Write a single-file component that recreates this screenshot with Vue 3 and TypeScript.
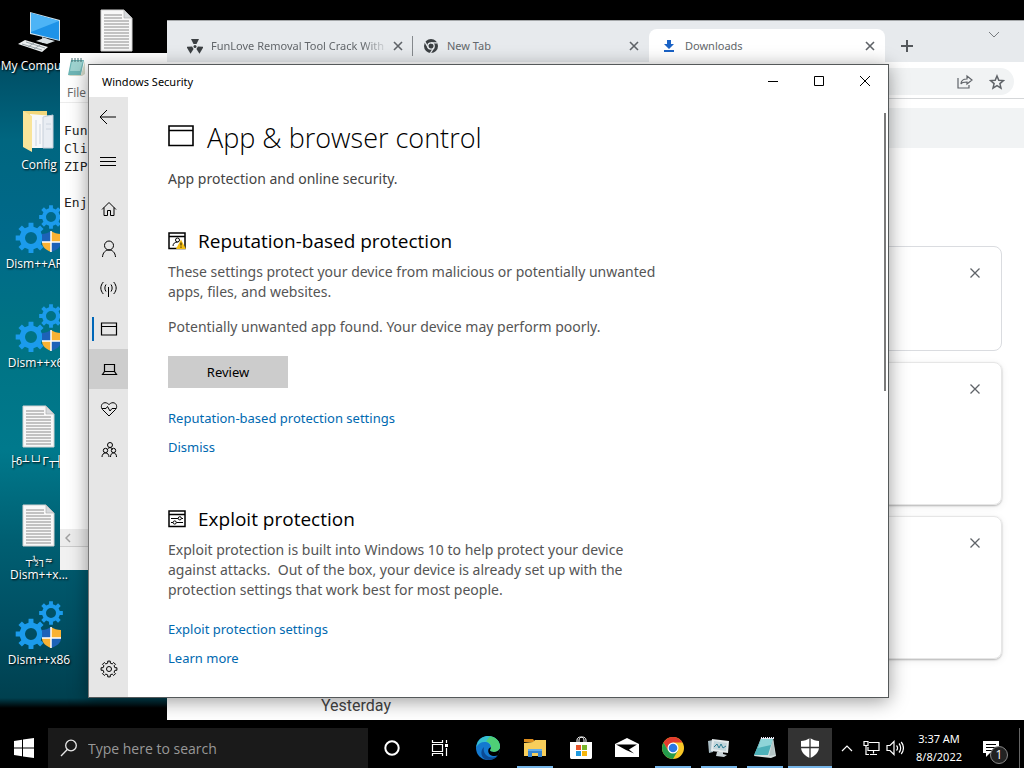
<script setup lang="ts">
import { ref } from 'vue'

type IconKind = 'computer' | 'folder' | 'gears' | 'doc'
interface Shortcut { kind: IconKind; name?: string; symbols?: string }

const shortcuts: Shortcut[] = [
  { kind: 'computer', name: 'My Computer' },
  { kind: 'folder', name: 'Config' },
  { kind: 'gears', name: 'Dism++AR...' },
  { kind: 'gears', name: 'Dism++x64' },
  { kind: 'doc', symbols: '├δ┴└┘Γ┬┤ú' },
  { kind: 'doc', symbols: '┬½┐≈', name: 'Dism++x...' },
  { kind: 'gears', name: 'Dism++x86' },
]

const notes = 'Fun\nCli\nZIP\n\nEnj'
const search = ref('')
const cards = ['short', 'tall', 'tall']

function gear(cx: number, cy: number, teeth: number, outer: number, inner: number): string {
  const step = (Math.PI * 2) / teeth
  const points: string[] = []
  for (let i = 0; i < teeth; i++) {
    const a = i * step - Math.PI / 2
    const parts: [number, number][] = [[-0.28, inner], [-0.2, outer], [0.2, outer], [0.28, inner]]
    for (const [k, r] of parts) {
      points.push(`${(cx + r * Math.cos(a + k * step)).toFixed(2)} ${(cy + r * Math.sin(a + k * step)).toFixed(2)}`)
    }
  }
  return `M${points.join('L')}Z`
}

const bigGear = gear(16, 33, 8, 15.5, 11.5)
const smallGear = gear(36, 12, 8, 12, 9)
const outlineGear = gear(9, 9, 8, 8, 6)
</script>

<template>
  <div class="screen">
    <main class="desktop">
      <div class="shortcuts">
        <div v-for="(s, i) in shortcuts" :key="i" class="shortcut">
          <svg v-if="s.kind === 'computer'" class="pic" viewBox="0 0 48 48">
            <path d="M15 5l30 8v21l-30-7z" fill="#cfe3ee" />
            <path d="M16 6l28 8v19l-28-7z" fill="#1d93e8" />
            <path d="M16 6l28 8-28 11z" fill="#4db4f6" />
            <path d="M27 30l6 2v4h-6z" fill="#a9b8c0" />
            <path d="M21 34l8-3 11 3-8 3z" fill="#d8e0e4" />
            <path d="M3 37l7-4 23 7-6 5z" fill="#eceff0" />
            <path d="M7 37l20 6M11 35l19 6M13 40l6-4M19 42l6-4" stroke="#9aa5aa" fill="none" />
          </svg>
          <svg v-else-if="s.kind === 'folder'" class="pic" viewBox="0 0 48 48">
            <path d="M8 5h24v36H8z" fill="#f2d77c" />
            <path d="M15 8l23 2v32H17z" fill="#f7f8fa" />
            <path d="M28 11l10-2v33H28z" fill="#e9edf3" stroke="#c6cfda" />
            <path d="M21 14v26M25 18v20M31 18h5M31 23h5" stroke="#ccd4df" />
            <path d="M8 5l9 5v36l-9-5z" fill="#f9e49a" />
          </svg>
          <svg v-else-if="s.kind === 'gears'" class="pic" viewBox="0 0 48 48">
            <g fill="#1b9bec" fill-rule="evenodd">
              <path :d="bigGear + 'M22 33a6 6 0 1 0-12 0a6 6 0 1 0 12 0Z'" />
              <path :d="smallGear + 'M41 12a5 5 0 1 0-10 0a5 5 0 1 0 10 0Z'" />
            </g>
            <path d="M36 26c-3 2-6 3-9 3v8h9z" fill="#1d62b8" />
            <path d="M36 26c3 2 6 3 10 3v8H36z" fill="#f9b233" />
            <path d="M27 37c0 5 4 8 9 10V37z" fill="#f9b233" />
            <path d="M46 37c0 5-4 8-10 10V37z" fill="#1d62b8" />
            <path d="M36 26v21M27 37h19" stroke="#fff" stroke-width="1.500" />
          </svg>
          <svg v-else class="pic" viewBox="0 0 48 48">
            <path d="M8 3h23l8 8v33H8z" fill="#f8f8f8" stroke="#d2d2d2" />
            <path d="M31 3v8h8z" fill="#d6d9dc" stroke="#aaa" stroke-width=".6" />
            <path d="M11 8h18M11 11h18M11 14h25M11 17h25M11 20h25M11 23h25M11 26h25M11 29h25M11 32h25M11 35h25M11 38h25M11 41h25" stroke="#8c8c8c" />
          </svg>
          <span v-if="s.symbols" class="caption symbols">{{ s.symbols }}</span>
          <span v-if="s.name" class="caption">{{ s.name }}</span>
        </div>
        <div class="shortcut">
          <svg class="pic" viewBox="0 0 48 48">
            <path d="M8 3h23l8 8v33H8z" fill="#f8f8f8" stroke="#d2d2d2" />
            <path d="M31 3v8h8z" fill="#d6d9dc" stroke="#aaa" stroke-width=".6" />
            <path d="M11 8h18M11 11h18M11 14h25M11 17h25M11 20h25M11 23h25M11 26h25M11 29h25M11 32h25M11 35h25M11 38h25M11 41h25" stroke="#8c8c8c" />
          </svg>
        </div>
      </div>

      <section class="notepad">
        <header class="np-title">
          <svg width="18" height="20" viewBox="0 0 18 20">
            <path d="M3 3h13l-3 15H0z" fill="#6db5b5" />
            <path d="M4 4h11l-3 10H2z" fill="#9ed3d0" />
            <path d="M0 18h13l4-14v13l-3 2H2z" fill="#d3d9c8" />
            <path d="M4 1v4M7 1v4M10 1v4M13 1v4" stroke="#446f70" />
          </svg>
        </header>
        <div class="np-menu">File</div>
        <pre class="np-text">{{ notes }}</pre>
        <div class="np-scroll">
          <svg width="6" height="10" viewBox="0 0 6 10"><path d="M5 1L1 5l4 4" fill="none" stroke="#a0a0a0" stroke-width="1.500" /></svg>
        </div>
        <div class="np-status"></div>
      </section>

      <section class="browser">
        <header class="strip">
          <div class="tab first">
            <svg class="fav" viewBox="0 0 16 16">
              <g fill="#3c4043">
                <path d="M4 1h8L9.500 6h-3z" />
                <path d="M4 1h8L9.500 6h-3z" transform="rotate(120 8 8.500)" />
                <path d="M4 1h8L9.500 6h-3z" transform="rotate(240 8 8.500)" />
                <circle cx="8" cy="8.500" r="1.500" />
              </g>
            </svg>
            <span class="tab-name fade">FunLove Removal Tool Crack With</span>
            <button class="x" aria-label="Close tab"><svg width="10" height="10" viewBox="0 0 10 10"><path d="M1 1l8 8M9 1L1 9" /></svg></button>
          </div>
          <div class="tab">
            <svg class="fav" viewBox="0 0 16 16">
              <circle cx="8" cy="8" r="7" fill="#3c4043" />
              <circle cx="8" cy="8" r="3.200" fill="#3c4043" stroke="#e7eaed" stroke-width="1.300" />
              <path d="M8 4.800h6.500M5.200 9.600L2 4M10.800 9.600L7.500 15" stroke="#e7eaed" stroke-width="1.300" />
            </svg>
            <span class="tab-name">New Tab</span>
            <button class="x" aria-label="Close tab"><svg width="10" height="10" viewBox="0 0 10 10"><path d="M1 1l8 8M9 1L1 9" /></svg></button>
          </div>
          <div class="tab active">
            <svg class="fav" viewBox="0 0 16 16"><path d="M6 2h4v4h3l-5 5-5-5h3zM3 12h10v2H3z" fill="#1a62c5" /></svg>
            <span class="tab-name">Downloads</span>
            <button class="x" aria-label="Close tab"><svg width="10" height="10" viewBox="0 0 10 10"><path d="M1 1l8 8M9 1L1 9" /></svg></button>
          </div>
          <button class="plus" aria-label="New tab"><svg width="12" height="12" viewBox="0 0 12 12"><path d="M6 0v12M0 6h12" stroke="#54585c" stroke-width="2" /></svg></button>
          <svg class="more" width="12" height="8" viewBox="0 0 12 8"><path d="M1 1l5 5 5-5" fill="none" stroke="#777b7f" /></svg>
        </header>
        <div class="toolbar">
          <div class="omnibox">
            <svg width="16" height="16" viewBox="0 0 16 16"><path d="M1 4v10h11v-3M4 10c0-4 3-5 6-5V2l5 4-5 4V8c-3 0-5 0-6 2z" fill="none" stroke="#5f6368" stroke-width="1.200" /></svg>
            <svg width="16" height="16" viewBox="0 0 16 16"><path d="M8 2l1.800 4.200 4.600.4-3.500 3 1.100 4.500L8 11.700l-4 2.400 1.100-4.500-3.500-3 4.600-.4z" fill="none" stroke="#5f6368" stroke-width="1.500" /></svg>
          </div>
        </div>
        <div class="band"></div>
        <div class="cards">
          <article v-for="(c, i) in cards" :key="i" class="card" :class="c">
            <button class="x" aria-label="Remove"><svg width="10" height="10" viewBox="0 0 10 10"><path d="M.5.500l9 9M9.500.500l-9 9" /></svg></button>
          </article>
        </div>
        <h4 class="day">Yesterday</h4>
      </section>

      <section class="security">
        <header class="titlebar">
          <span class="win-name">Windows Security</span>
          <button aria-label="Minimize"><svg width="10" height="10" viewBox="0 0 10 10"><path d="M0 5.500h10" /></svg></button>
          <button aria-label="Maximize"><svg width="10" height="10" viewBox="0 0 10 10"><path d="M.5.500h9v9h-9z" /></svg></button>
          <button aria-label="Close"><svg width="12" height="12" viewBox="0 0 12 12"><path d="M1 1l10 10M11 1L1 11" /></svg></button>
        </header>
        <div class="body">
          <nav class="rail">
            <button aria-label="Back"><svg viewBox="0 0 18 18"><path d="M7 2L0 9l7 7M0 9h16" /></svg></button>
            <button class="menu" aria-label="Menu"><svg viewBox="0 0 18 18"><path d="M0 5.500h16M0 9.500h16M0 13.500h16" /></svg></button>
            <button aria-label="Home"><svg viewBox="0 0 18 18"><path d="M2 9.500l7-7 7 7M4 7.500v8h3.500v-5h3v5H14v-8" /></svg></button>
            <button aria-label="Account protection"><svg viewBox="0 0 18 18"><circle cx="9" cy="5.500" r="4.500" /><path d="M2.500 17c.3-4.500 3-7 6.500-7s6.200 2.500 6.500 7" /></svg></button>
            <button aria-label="Firewall"><svg viewBox="0 0 18 18"><path d="M8.500 7v10M6 4.500c-1.500 2-1.500 5 0 7M11 4.500c1.500 2 1.500 5 0 7M3.300 2c-3.300 4-3.300 8 0 12M13.700 2c3.300 4 3.300 8 0 12" /></svg></button>
            <button class="current" aria-label="App &amp; browser control"><svg viewBox="0 0 18 18"><path d="M1.500 3v12h15V3zM1.500 6.500h15" stroke-width="1.200" /></svg></button>
            <button class="hover" aria-label="Device security"><svg viewBox="0 0 18 18"><path d="M4.500 4.500h10v7h-10zM2.500 14.500l2-3h10l2 3z" stroke-width="1.200" /></svg></button>
            <button aria-label="Device health"><svg viewBox="0 0 18 18"><path d="M9 16L2.500 9.500C.5 7.500 1 3 5 2.700c2 0 3 1 4 2 1-1 2-2 4-2 4 .3 4.500 4.800 2.500 6.800zM2 8.500h4l1.500-2 2.500 4.500 2-2.500h4" /></svg></button>
            <button aria-label="Family options"><svg viewBox="0 0 18 18"><circle cx="10" cy="5" r="2.500" /><circle cx="5.500" cy="10.500" r="2.200" /><circle cx="13.500" cy="10.500" r="2.200" /><path d="M2 17c0-2.500 1.500-4 3.500-4S9 14.500 9 17M10.500 17c0-2.500 1-4 3-4s3 1.500 3 4M7.500 9.500c1-2.500 4-2.500 5 0" /></svg></button>
            <button class="last" aria-label="Settings"><svg viewBox="0 0 18 18"><path :d="outlineGear" /><circle cx="9" cy="9" r="2.500" /></svg></button>
          </nav>
          <div class="content">
            <h1><svg width="26" height="22" viewBox="0 0 26 22"><path d="M1 1h24v19.500H1zM1 5.500h24" fill="none" stroke="#000" stroke-width="1.600" /></svg>App &amp; browser control</h1>
            <p class="lead">App protection and online security.</p>

            <h2>
              <svg width="18" height="18" viewBox="0 0 18 18">
                <path d="M1 1h16v15.500H1zM1 4.500h16" fill="none" stroke="#000" stroke-width="1.500" />
                <circle cx="9.500" cy="8" r="2" fill="none" stroke="#000" /><path d="M5 14c0-2.500 2-4 4.500-4" fill="none" stroke="#000" />
                <path d="M13 7.500l5 9.500H8z" fill="#f5bf15" /><path d="M13 10.500v3M13 14.500v1.200" stroke="#403000" stroke-width="1.200" />
              </svg>Reputation-based protection
            </h2>
            <p>These settings protect your device from malicious or potentially unwanted apps, files, and websites.</p>
            <p class="notice">Potentially unwanted app found. Your device may perform poorly.</p>
            <button class="review">Review</button>
            <a href="#reputation">Reputation-based protection settings</a>
            <a href="#dismiss" class="next">Dismiss</a>

            <h2 class="second">
              <svg width="18" height="18" viewBox="0 0 18 18">
                <path d="M1 1h16v15.500H1zM1 4.500h16" fill="none" stroke="#000" stroke-width="1.500" />
                <path d="M3 8.500h7M13.500 8.500H15M3 12.500h2M8.500 12.500H15" stroke="#000" stroke-width="1.200" />
                <circle cx="11.800" cy="8.300" r="1.600" fill="none" stroke="#000" /><circle cx="6.700" cy="12.500" r="1.600" fill="none" stroke="#000" />
              </svg>Exploit protection
            </h2>
            <p>Exploit protection is built into Windows 10 to help protect your device against attacks.&nbsp; Out of the box, your device is already set up with the protection settings that work best for most people.</p>
            <a href="#exploit">Exploit protection settings</a>
            <a href="#learn" class="next">Learn more</a>
          </div>
          <div class="thumb"></div>
        </div>
      </section>
    </main>

    <footer class="taskbar">
      <button class="start" aria-label="Start"><svg width="20" height="20" viewBox="0 0 20 20"><path d="M0 3l8-1.200v7.700H0zM9 1.600L20 0v9.500H9zM0 10.500h8v7.700L0 17zM9 10.500h11V20L9 18.400z" fill="#fff" /></svg></button>
      <label class="search">
        <svg width="18" height="18" viewBox="0 0 18 18"><circle cx="11" cy="6.500" r="5.300" /><path d="M7.300 10.500L1 17" /></svg>
        <input v-model="search" type="text" placeholder="Type here to search" aria-label="Search" />
      </label>
      <div class="tiles">
        <button class="tile wide" aria-label="Cortana"><svg width="18" height="18" viewBox="0 0 18 18"><circle cx="9" cy="9" r="6.700" fill="none" stroke="#fff" stroke-width="2" /></svg></button>
        <button class="tile wide" aria-label="Task view"><svg width="18" height="18" viewBox="0 0 18 18"><path d="M1.500 1v2.500h10V1M1.500 17v-2.500h10V17M1.500 5.500h10v7h-10zM15.500 1v3M15.500 9v8" fill="none" stroke="#fff" stroke-width="1.200" /><path d="M14 5h3v3h-3z" fill="#fff" /></svg></button>
        <button class="tile wide" aria-label="Edge">
          <svg width="24" height="24" viewBox="0 0 24 24">
            <circle cx="12" cy="12" r="12" fill="#1479cf" />
            <path d="M1 8C3 2 8 0 12 0c7 0 12 5 12 10.500 0 4-3 5.500-6 5.500-2 0-4-.5-4-1.700 0-.8 1-1.300 1-3C15 8 12 6 8.500 6 5 6 2.500 7.500.3 11z" fill="#35bfd0" />
            <path d="M14 .2c6 1 10 5 10 10.300 0 4-3 5.500-6 5.500-2 0-4-.5-4-1.700 0-.8 1-1.300 1-3 0-3-2-5-5-6z" fill="#4fcf76" />
            <path d="M8 11c-1.500 6 3 10.500 8.500 10.500 2.300 0 4-.8 5.500-2C20 22.500 16 24 12 24 4 23 4 14 8 11z" fill="#0b4a94" />
            <path d="M15 11.300c0 1.700-1 2.200-1 3 0 1.200 2 1.700 4 1.700 2.300 0 5-1 5.700-3.400L24 14l-1.800 5.300c-5 2-10-.3-10-4.300 0-2 1-3.200 2.800-3.700z" fill="#000" />
          </svg>
        </button>
        <button class="tile open" aria-label="File Explorer">
          <svg width="22" height="20" viewBox="0 0 22 20"><path d="M0 1h9l2 3H0z" fill="#dc8c1c" /><path d="M0 5l9-1 2-2h11v16H0z" fill="#f7ce5b" /><path d="M4 11h14v8h-4v-4H8v4H4z" fill="#3584cf" /><path d="M4 11h14v2H4z" fill="#65aee8" /></svg>
        </button>
        <button class="tile" aria-label="Store">
          <svg width="24" height="24" viewBox="0 0 24 24"><path d="M8 7V4c0-4 7-4 7 0v3M10 7V4c0-4 7-4 7 0v3" fill="none" stroke="#fff" /><path d="M1 6h22v15c0 1.500-.5 2-2 2H3c-1.500 0-2-.5-2-2z" fill="#fff" /><path d="M7 9h5v5H7z" fill="#e8552b" /><path d="M13 9h5v5h-5z" fill="#79b52c" /><path d="M7 15h5v5H7z" fill="#209be0" /><path d="M13 15h5v5h-5z" fill="#f5b60c" /></svg>
        </button>
        <button class="tile" aria-label="Mail"><svg width="24" height="20" viewBox="0 0 24 20"><path d="M0 6l12-6 12 6v13H0z" fill="#fff" /><path d="M1 6.500h21l-8 5 5 4-8-3.500z" fill="#000" /></svg></button>
        <button class="tile open" aria-label="Chrome">
          <svg width="22" height="22" viewBox="0 0 22 22"><circle cx="11" cy="11" r="11" fill="#f9c727" /><path d="M1.500 5.500A11 11 0 0 1 20.500 5.500H11L6.200 13.700z" fill="#e33b2e" /><path d="M1.500 5.500A11 11 0 0 0 11 22l4.800-8.200-9.600 0z" fill="#249a4b" /><circle cx="11" cy="11" r="5.500" fill="#fff" /><circle cx="11" cy="11" r="4.300" fill="#2b78e4" /></svg>
        </button>
        <button class="tile open" aria-label="Monitor">
          <svg width="22" height="20" viewBox="0 0 22 20"><path d="M0 3l5-1v12l-4 1z" fill="#a9bcc4" /><path d="M4 1l17 2-1 12-17-2z" fill="#e4eaec" /><path d="M6 3l13 2-1 8-13-2z" fill="#c3d5db" /><path d="M6 9l3-3 2 4 2-4 2 4 3-2" fill="none" stroke="#2b7d93" /><path d="M9 14h6v2l4 1-3 2-8-1z" fill="#c9d3d7" /></svg>
        </button>
        <button class="tile open" aria-label="Notepad">
          <svg width="24" height="22" viewBox="0 0 24 22"><path d="M8 1h12l3 18-5 2-17-2z" fill="#d5e0df" /><path d="M8 2h12l-5 16H1z" fill="#4db0b8" /><path d="M8 2h12l-2 6-13 3z" fill="#8fd5d8" /><path d="M20 2l2 16-6 1z" fill="#b4c5c5" /><path d="M8 1h13" stroke="#eef" stroke-dasharray="1 1" stroke-width="2" /></svg>
        </button>
        <button class="tile focused" aria-label="Windows Security">
          <svg width="18" height="20" viewBox="0 0 18 20"><path d="M9 0c3 2 6 2.700 9 3v6c0 5.500-4 9-9 11-5-2-9-5.500-9-11V3c3-.3 6-1 9-3z" fill="#fff" /><path d="M9 0v20M0 9.500h18" stroke="#333" stroke-width="1.300" /></svg>
        </button>
      </div>
      <div class="tray">
        <button aria-label="Hidden icons"><svg width="12" height="8" viewBox="0 0 12 8"><path d="M1 7l5-5 5 5" /></svg></button>
        <button aria-label="Network"><svg width="17" height="16" viewBox="0 0 17 16"><path d="M6 2.500h10v8H5V7M10.500 10.500v3M7 14.500h7M1 1.500h4v4H1zM3 5.500v9h3" /></svg></button>
        <button aria-label="Volume"><svg width="18" height="16" viewBox="0 0 18 16"><path d="M1 5.500h3l4-4v13l-4-4H1zM10.500 5.500c1.300 1.500 1.300 3.500 0 5M13 3.500c2.200 2.500 2.200 6.500 0 9M15.200 2c3 3.500 3 8.500 0 12" /></svg></button>
        <div class="clock"><span>3:37 AM</span><span>8/8/2022</span></div>
        <button class="notify" aria-label="Notifications">
          <svg width="18" height="17" viewBox="0 0 18 17"><path class="solid" d="M1 1h16v12H8l-4 4v-4H1z" /><path class="ruled" d="M4 4.500h10M4 7.500h10M4 10.500h6" /></svg>
          <span class="badge">1</span>
        </button>
        <div class="peek"></div>
      </div>
    </footer>
  </div>
</template>

<style>
body { margin: 0; background: #000; }
</style>

<style scoped>
.screen {
  display: flex;
  flex-direction: column;
  height: 100vh;
  overflow: hidden;
  background: #000;
  font-family: "Segoe UI", "Open Sans", "Noto Sans", sans-serif;
  color: #000;
}
button { border: 0; padding: 0; margin: 0; background: none; font: inherit; color: inherit; display: flex; align-items: center; justify-content: center; }
svg { display: block; flex: none; }
h1, h2, h4, p, pre { margin: 0; font-weight: 400; }

.desktop {
  position: relative;
  flex: 1;
  min-height: 0;
  background: linear-gradient(#000 64px, #005067 70px, #006680 140px, #00698a 230px, #007384 330px, #00798c 450px, #005f72 540px, #004e62 630px, #00404f 698px, #000 708px);
}
.shortcuts { display: flex; flex-flow: column wrap; align-content: flex-start; height: 693px; }
.shortcut { display: flex; flex-direction: column; align-items: center; box-sizing: border-box; width: 78px; height: 99px; padding-top: 7px; }
.shortcut .pic { width: 48px; height: 48px; margin-bottom: 4px; }
.caption { color: #fff; font-size: 12px; line-height: 14px; white-space: nowrap; text-shadow: 1px 1px 2px #000; }
.symbols { font-family: "DejaVu Sans Mono", monospace; font-size: 11px; }

.notepad { position: absolute; left: 60px; top: 53px; width: 400px; height: 517px; display: flex; flex-direction: column; background: #fff; overflow: hidden; }
.np-title { height: 29px; padding: 4px 8px 0; box-sizing: border-box; }
.np-menu { height: 20px; padding-left: 7px; border-bottom: 1px solid #ececec; font-size: 12px; line-height: 22px; color: #666; }
.np-text { flex: 1; padding: 19px 4px 0; font-family: "DejaVu Sans Mono", monospace; font-size: 13px; line-height: 18px; color: #222; }
.np-scroll { height: 17px; padding-left: 5px; background: #ececec; border-bottom: 1px solid #ccc; display: flex; align-items: center; }
.np-status { height: 23px; background: #f1f1f1; }

.browser { position: absolute; left: 167px; right: 0; top: 20px; bottom: 8px; display: flex; flex-direction: column; background: #fff; overflow: hidden; }
.strip { display: flex; box-sizing: border-box; height: 42px; padding: 8px 0 0 10px; border-top: 1px solid #a5a8aa; background: #e7eaed; }
.tab { display: flex; align-items: center; box-sizing: border-box; width: 236px; height: 33px; padding: 0 10px; color: #63676b; font-family: "Noto Sans", sans-serif; font-size: 11px; position: relative; }
.first::after { content: ""; position: absolute; right: 0; top: 7px; width: 1px; height: 20px; background: #85898d; }
.fav { width: 16px; height: 16px; margin-right: 8px; }
.tab-name { flex: 1; overflow: hidden; white-space: nowrap; }
.fade { margin-right: 4px; mask-image: linear-gradient(90deg, #000 85%, transparent); }
.active { background: #fff; border-radius: 8px 8px 0 0; padding-left: 12px; }
.x svg { stroke: #5f6368; stroke-width: 1.600; fill: none; }
.plus { width: 44px; height: 33px; }
.more { margin: 2px 24px 0 auto; }
.toolbar { height: 37px; box-sizing: border-box; padding: 6px 10px 3px 100px; border-bottom: 1px solid #d5d7d9; }
.omnibox { display: flex; align-items: center; justify-content: flex-end; gap: 16px; height: 27px; padding-right: 9px; border-radius: 14px; background: #f1f3f4; }
.band { height: 40px; margin-top: 9px; background: #f1f3f4; }
.cards { display: flex; flex-direction: column; gap: 11px; margin: 98px 22px 0 154px; }
.card { display: flex; justify-content: flex-end; align-items: flex-start; box-sizing: border-box; padding: 21px; border: 1px solid #dadce0; border-radius: 8px; }
.card .x svg { stroke-width: 1.300; }
.short { height: 105px; }
.tall { height: 143px; border-color: #e6e6e6; box-shadow: 0 1px 2px #0004, 0 2px 8px #0001; }
.day { margin: 37px 0 0 154px; font-family: Roboto, sans-serif; font-size: 16px; line-height: 20px; color: #444; }

.security { position: absolute; left: 88px; right: 135px; top: 64px; bottom: 30px; box-sizing: border-box; display: flex; flex-direction: column; border: 1px solid #55595a; border-left-color: #777; background: #fff; box-shadow: 0 3px 18px #0006; }
.titlebar { display: flex; align-items: center; height: 32px; }
.win-name { flex: 1; padding-left: 13px; font-family: "Noto Sans", sans-serif; font-size: 11px; }
.titlebar button { width: 46px; height: 32px; }
.titlebar svg { fill: none; stroke: #000; stroke-width: 1; }
.body { display: flex; flex: 1; min-height: 0; }
.rail { display: flex; flex-direction: column; width: 39px; padding-bottom: 8px; background: #e6e6e6; }
.rail button { height: 40px; }
.rail svg { width: 18px; height: 18px; fill: none; stroke: #000; stroke-width: 1; overflow: visible; }
.rail .menu { margin: 4px 0 8px; }
.rail .current { position: relative; }
.current::before { content: ""; position: absolute; left: 3px; top: 8px; width: 2px; height: 24px; background: #0067b8; }
.rail .hover { background: #cdcdcd; }
.rail .last { margin-top: auto; }
.content { flex: 1; padding: 21px 0 0 40px; color: #555; font-family: "Noto Sans", sans-serif; font-size: 14px; line-height: 20px; }
h1, h2 { display: flex; align-items: center; color: #000; font-family: "Open Sans", sans-serif; }
h1 { font-size: 27px; font-weight: 300; line-height: 40px; gap: 13px; }
h1 svg { margin-bottom: 5px; }
h2 { margin-top: 38px; font-size: 19px; line-height: 28px; gap: 12px; }
.content p { max-width: 500px; margin-top: 7px; }
.content .lead { margin-top: 11px; color: #444; }
.content .notice { margin-top: 15px; }
.review { width: 120px; height: 32px; margin-top: 19px; background: #ccc; color: #000; font-size: 13px; }
.content a { display: block; width: fit-content; margin-top: 20px; font-size: 13px; color: #0069b0; text-decoration: none; }
.content p + a { margin-top: 19px; }
.content .next { margin-top: 9px; }
.content .second { margin-top: 48px; }
.thumb { width: 2px; height: 278px; margin: 16px 2px 0 0; background: #7a7a7a; }

.taskbar { display: flex; height: 40px; background: #000; color: #fff; }
.start { width: 48px; }
.search { display: flex; align-items: center; gap: 10px; box-sizing: border-box; width: 320px; padding: 0 12px; background: #1a1a1a; }
.search svg { fill: none; stroke: #e8e8e8; stroke-width: 1.300; }
.search input { flex: 1; min-width: 0; border: 0; padding: 0; outline: 0; background: none; font-family: inherit; font-size: 14px; color: #fff; }
.search input::placeholder { color: #989898; opacity: 1; }
.tiles { display: flex; }
.tile { position: relative; width: 46px; }
.wide { width: 48px; }
.open::after { content: ""; position: absolute; left: 5px; right: 5px; bottom: 0; height: 2px; background: #76b5e8; }
.focused { width: 44px; background: #333; }
.focused::after { content: ""; position: absolute; left: 0; right: 0; bottom: 0; height: 2px; background: #76b5e8; }
.tray { display: flex; margin-left: auto; }
.tray button { width: 24px; }
.tray svg { fill: none; stroke: #fff; stroke-width: 1.200; }
.clock { display: flex; flex-direction: column; justify-content: center; align-items: center; width: 64px; font-family: "Noto Sans", sans-serif; font-size: 11px; line-height: 18px; white-space: nowrap; }
.tray .notify { position: relative; width: 44px; padding-right: 4px; }
.notify .solid { fill: #fff; stroke: none; }
.notify .ruled { stroke: #000; }
.badge { position: absolute; left: 19px; top: 18px; box-sizing: border-box; width: 18px; height: 18px; border: 1px solid #888; border-radius: 50%; background: #222; font-size: 12px; line-height: 16px; text-align: center; }
.peek { width: 4px; margin-left: 4px; border-left: 1px solid #666; }
</style>
